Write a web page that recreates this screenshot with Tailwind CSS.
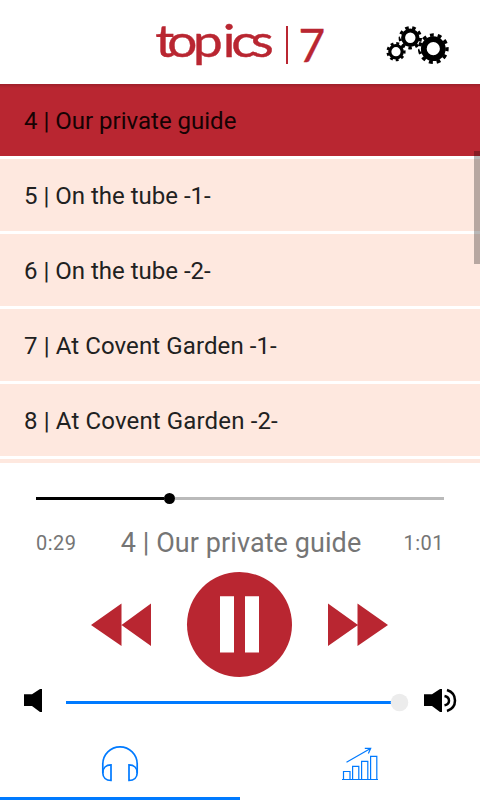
<!DOCTYPE html>
<html lang="en">
<head>
  <meta charset="UTF-8">
  <meta name="viewport" content="width=device-width, initial-scale=1.0">
  <title>topics 7</title>
  <script src="https://cdn.jsdelivr.net/npm/@tailwindcss/browser@4"></script>
</head>
<body class="bg-white font-['Roboto',sans-serif] text-[#212121]">
  <div class="flex flex-col w-[480px] h-[800px] overflow-hidden">

    <!-- Header -->
    <header class="h-[84px] shrink-0">
      <svg class="block" width="480" height="84" viewBox="0 0 480 84">
        <g fill="#b92631" stroke="#b92631" stroke-width=".4" font-family="Lato, sans-serif">
          <text transform="scale(1.18 1)" x="131.500 141.700 163.500 188.700 196 212.500" y="57" font-size="45">topics</text>
          <text x="298.500" y="62" font-size="46">7</text>
        </g>
        <path d="M286 26h2v38h-2z" fill="#b92631"/>
        <!-- Settings gears -->
        <g fill="none" stroke="#000">
          <circle cx="396" cy="51.700" r="6.200" stroke-width="3.200"/>
          <circle cx="396" cy="51.700" r="8.300" stroke-width="2.600" pathLength="18" stroke-dasharray="1 1" transform="rotate(-8 396 51.700)"/>
          <circle cx="410.300" cy="37.800" r="7.200" stroke-width="4"/>
          <circle cx="410.300" cy="37.800" r="10.200" stroke-width="3" pathLength="18" stroke-dasharray="1 1" transform="rotate(1 410.300 37.800)"/>
          <circle cx="433.300" cy="48.700" r="9.500" stroke-width="5.800"/>
          <circle cx="433.300" cy="48.700" r="13.700" stroke-width="3.400" pathLength="22" stroke-dasharray="1 1" transform="rotate(-6 433.300 48.700)"/>
        </g>
      </svg>
    </header>

    <!-- Track list -->
    <main class="relative h-[379px] shrink-0 overflow-hidden">
      <ul class="flex flex-col gap-[3px] text-2xl">
        <li class="h-[72px] shrink-0 px-6 pt-px flex items-center bg-[#b92631] text-[#160203]">4 | Our private guide</li>
        <li class="h-[72px] shrink-0 px-6 pt-px flex items-center bg-[#fee8df]">5 | On the tube -1-</li>
        <li class="h-[72px] shrink-0 px-6 pt-px flex items-center bg-[#fee8df]">6 | On the tube -2-</li>
        <li class="h-[72px] shrink-0 px-6 pt-px flex items-center bg-[#fee8df] tracking-[.1px]">7 | At Covent Garden -1-</li>
        <li class="h-[72px] shrink-0 px-6 pt-px flex items-center bg-[#fee8df] tracking-[.14px]">8 | At Covent Garden -2-</li>
        <li class="h-[72px] shrink-0 bg-[#fee8df]"></li>
      </ul>
      <div class="absolute top-0 inset-x-0 h-1 bg-linear-to-b from-black/15 to-transparent"></div>
      <div class="absolute right-0 top-[67px] w-1.5 h-[113px] bg-black/28"></div>
    </main>

    <!-- Seek bar -->
    <div class="h-[71px] shrink-0 px-9 flex items-center">
      <div class="h-[3px] w-[128px] bg-black"></div>
      <div class="size-[11px] rounded-full bg-black"></div>
      <div class="h-[3px] grow bg-[#bababa]"></div>
    </div>
    <div class="h-[32px] shrink-0 -mt-[6px] px-9 flex items-center justify-between text-[#757575]">
      <span class="text-xl pb-0.5 w-[60px] tracking-[.5px]">0:29</span>
      <span class="text-[27px] pb-px pl-[2px] whitespace-nowrap tracking-[.08px]">4 | Our private guide</span>
      <span class="text-xl pb-0.5 w-[60px] text-right tracking-[.5px]">1:01</span>
    </div>

    <!-- Transport -->
    <div class="h-[120px] shrink-0">
      <svg class="block" width="480" height="120" viewBox="0 560 480 120">
        <g fill="#b92631">
          <path d="M91 625l30.500-21.500v42.500zM121.500 625l29.500-21.500v42.500z"/>
          <path d="M328 603.500l30 21.500-30 21zM357.500 603.500l30.500 21.500-30.500 21z"/>
          <circle cx="239.500" cy="624.500" r="52.500"/>
        </g>
        <path d="M220 596.300h14v56.200h-14zM245 596.300h14v56.200h-14z" fill="#fff"/>
      </svg>
    </div>

    <!-- Volume -->
    <div class="h-[44px] shrink-0">
      <svg class="block" width="480" height="44" viewBox="0 680 480 44">
        <path d="M24 694.300h8l8-5.300h2v23h-2l-8-6h-8z"/>
        <path d="M66 701h325v3H66z" fill="#007aff"/>
        <circle cx="399.500" cy="702.500" r="8.800" fill="#ececec"/>
        <path d="M424 694.300h8l8-5.300h2v23h-2l-8-6h-8z"/>
        <path d="M444.500 696q4.500 1 4.500 4.700t-4.500 4.600M447 690q8 2.600 8 10.500t-8 10.500" fill="none" stroke="#000" stroke-width="2.500"/>
      </svg>
    </div>

    <!-- Tabs -->
    <nav class="grow flex items-stretch">
      <div class="w-1/2 border-b-[3px] border-[#007aff]">
        <svg class="block" width="240" height="73" viewBox="0 724 240 73" fill="none" stroke="#007aff" stroke-width="1.700">
          <path d="M102.800 773v-9a17.200 17.200 0 0 1 34.400 0v9"/>
          <path d="M111 764.800v15.700c-5 0-8.200-3-8.200-7.700s3.200-8 8.200-8zM129 764.800v15.700c5 0 8.200-3 8.200-7.700s-3.200-8-8.200-8z"/>
        </svg>
      </div>
      <div class="w-1/2">
        <svg class="block" width="240" height="73" viewBox="240 724 240 73" fill="none" stroke="#007aff" stroke-width="1.200">
          <path d="M342 779.500h36M343.500 779.500v-8h6.500v8M352.600 779.500v-13.200h6.200v13.200M361.600 779.500v-18.200h6.200v18.200M370.600 779.500v-23.200h6.200v23.200"/>
          <path d="M346.500 762.300l24-13.800M364.800 748.300h5.900l-2.300 5.200"/>
        </svg>
      </div>
    </nav>
  </div>
</body>
</html>
